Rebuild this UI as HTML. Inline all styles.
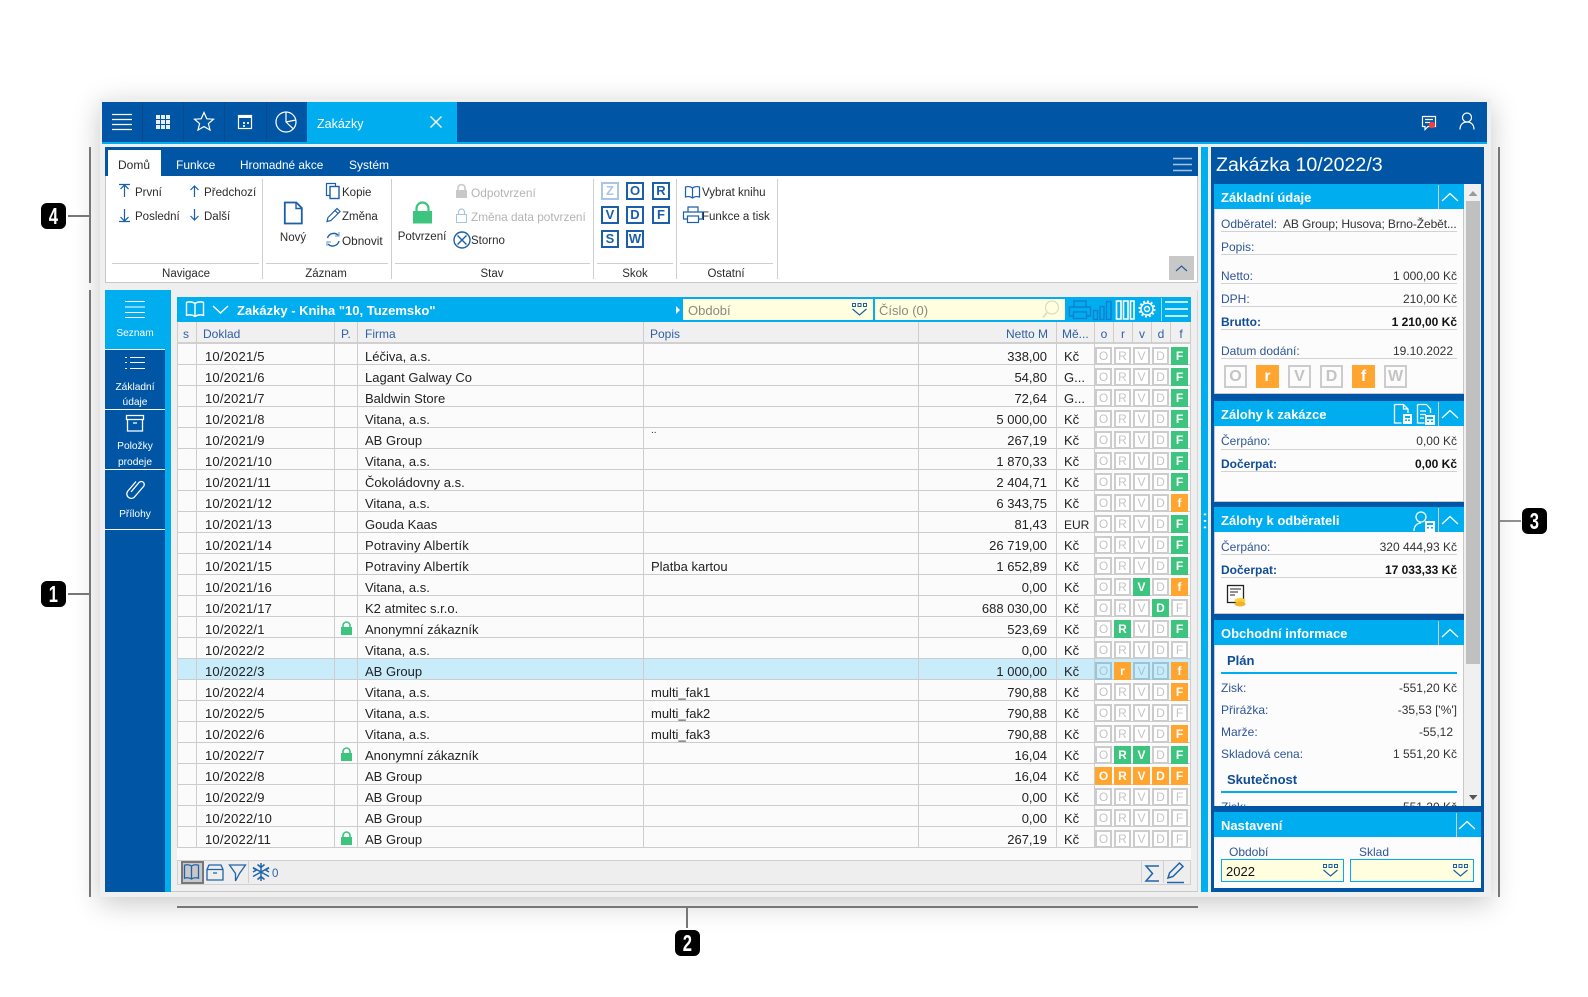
<!DOCTYPE html>
<html lang="cs"><head><meta charset="utf-8"><title>Zakázky</title>
<style>
html,body{margin:0;padding:0;background:#fff}
#p{position:relative;width:1588px;height:997px;overflow:hidden;background:#fff;font-family:"Liberation Sans",sans-serif;font-size:12px;color:#2b2b2b}
#p div,#p span.t{position:absolute}
.t{white-space:nowrap;line-height:16px}
.w{color:#fff}
.bw{color:#fff;font-weight:bold;font-size:13px}
.lb{color:#2f5597}
.lbb{color:#0f4c97;font-weight:bold}
.v{color:#333}
.vb{color:#111;font-weight:bold}
.g{color:#b4b4b4}
.c{transform:translateX(-50%)}
.sk{width:14px;height:14px;border:2px solid #1a5fa8;color:#1a5fa8;font-weight:bold;font-size:13px;line-height:14px;text-align:center;background:#fff}
.h{color:#2f5fa5;top:326px}
.r{left:177px;width:1014px;height:20px;border-bottom:1px solid #ccc;font-size:13px;line-height:26px;color:#222}
.r span{position:absolute;white-space:nowrap;top:0}
.a{left:28px;letter-spacing:.2px}.f{left:188px}.o{left:474px}.n{right:144px}.m{left:887px}
.r b{position:absolute;top:3px;width:13px;height:14px;border:2px solid #ccc;color:#c4c4c4;font-weight:normal;font-size:12px;line-height:14px;text-align:center;background:#fff}
.r b:nth-of-type(1){left:918px}.r b:nth-of-type(2){left:937px}.r b:nth-of-type(3){left:956px}.r b:nth-of-type(4){left:975px}.r b:nth-of-type(5){left:994px}
.r b.x{background:#3dc47e;border-color:#3dc47e;color:#fff;font-weight:bold}
.r b.y{background:#ffa530;border-color:#ffa530;color:#fff;font-weight:bold}
.s b{background:transparent;border-color:#9cc4d6;color:#a8c4d2}
.hd{background:#00aeef;height:25px;left:1214px;width:250px}
.bd{background:#fcfcfc;left:1214px;width:248px;border:1px solid #c8c8c8;border-top:0}
.bx{width:19px;height:19px;top:365px;border:2px solid #ccc;color:#c4c4c4;font-weight:bold;font-size:16px;line-height:19px;text-align:center}
.bx.y{background:#ffa530;border-color:#ffa530;color:#fff}
.ba{background:#000;color:#fff;width:25px;height:26px;border-radius:6px;font-weight:bold;font-size:23px;line-height:26px;text-align:center}
.ba span{display:inline-block;transform:scaleX(.72)}
</style></head><body><div id="p">

<div style="left:100px;top:99px;width:1391px;height:798px;background:#efefef;box-shadow:0 6px 26px rgba(0,0,0,.22)"></div>

<!-- top bar -->
<div style="left:102px;top:102px;width:1385px;height:40px;background:#0056a4"></div>
<div style="left:102px;top:142px;width:1385px;height:2px;background:#00aeef"></div>
<div style="left:307px;top:102px;width:150px;height:40px;background:#00aeef"></div>
<span class="t w" style="left:317px;top:116px;font-size:12.5px">Zakázky</span>

<!-- ribbon -->
<div style="left:105px;top:147px;width:1093px;height:29px;background:#0056a4"></div>
<div style="left:105px;top:176px;width:1091px;height:106px;background:#fff;border:1px solid #c8c8c8;border-top:0"></div>
<div style="left:108px;top:150px;width:53px;height:26px;background:#fff"></div>
<span class="t" style="left:118px;top:157px">Domů</span>
<span class="t w" style="left:176px;top:157px">Funkce</span>
<span class="t w" style="left:240px;top:157px;font-size:11.8px">Hromadné akce</span>
<span class="t w" style="left:349px;top:157px">Systém</span>

<span class="t" style="left:135px;top:185px;font-size:11.5px">První</span>
<span class="t" style="left:204px;top:185px;font-size:11.6px">Předchozí</span>
<span class="t" style="left:135px;top:209px;font-size:11.5px">Poslední</span>
<span class="t" style="left:204px;top:209px;font-size:11.5px">Další</span>
<span class="t c" style="left:293px;top:230px;font-size:11.5px">Nový</span>
<span class="t" style="left:342px;top:185px;font-size:11.5px">Kopie</span>
<span class="t" style="left:342px;top:209px;font-size:11.5px">Změna</span>
<span class="t" style="left:342px;top:233px;font-size:11.8px">Obnovit</span>
<span class="t c" style="left:422px;top:229px;font-size:11.5px">Potvrzení</span>
<span class="t g" style="left:471px;top:185px;font-size:11.9px">Odpotvrzení</span>
<span class="t g" style="left:471px;top:209px;font-size:11.8px">Změna data potvrzení</span>
<span class="t" style="left:471px;top:233px;font-size:11.5px">Storno</span>
<div class="sk" style="left:601px;top:182px;border-color:#a9c6e4;color:#a9c6e4">Z</div>
<div class="sk" style="left:626px;top:182px">O</div>
<div class="sk" style="left:652px;top:182px">R</div>
<div class="sk" style="left:601px;top:206px">V</div>
<div class="sk" style="left:626px;top:206px">D</div>
<div class="sk" style="left:652px;top:206px">F</div>
<div class="sk" style="left:601px;top:230px">S</div>
<div class="sk" style="left:626px;top:230px">W</div>
<span class="t" style="left:702px;top:185px;font-size:11.5px">Vybrat knihu</span>
<span class="t" style="left:702px;top:209px;font-size:11.5px">Funkce a tisk</span>
<span class="t c" style="left:186px;top:266px;font-size:11.5px">Navigace</span>
<span class="t c" style="left:326px;top:266px;font-size:11.5px">Záznam</span>
<span class="t c" style="left:492px;top:266px;font-size:11.5px">Stav</span>
<span class="t c" style="left:635px;top:266px;font-size:11.5px">Skok</span>
<span class="t c" style="left:726px;top:266px;font-size:11.5px">Ostatní</span>
<div style="left:1169px;top:256px;width:25px;height:24px;background:#c8c8c8"></div>

<!-- left sidebar -->
<div style="left:105px;top:290px;width:60px;height:602px;background:#0056a4"></div>
<div style="left:165px;top:290px;width:6px;height:602px;background:#00aeef"></div>
<div style="left:105px;top:290px;width:60px;height:59px;background:#00aeef"></div>
<div style="left:105px;top:349px;width:60px;height:1px;background:#fff"></div>
<div style="left:105px;top:409px;width:60px;height:1px;background:#fff"></div>
<div style="left:105px;top:469px;width:60px;height:1px;background:#fff"></div>
<div style="left:105px;top:529px;width:60px;height:1px;background:#fff"></div>
<span class="t w c" style="left:135px;top:326px;font-size:10.2px">Seznam</span>
<span class="t w c" style="left:135px;top:380px;font-size:10.2px">Základní</span>
<span class="t w c" style="left:135px;top:395px;font-size:10.2px">údaje</span>
<span class="t w c" style="left:135px;top:439px;font-size:10.2px">Položky</span>
<span class="t w c" style="left:135px;top:455px;font-size:10.2px">prodeje</span>
<span class="t w c" style="left:135px;top:507px;font-size:10.2px">Přílohy</span>

<!-- main -->
<div style="left:171px;top:290px;width:1026px;height:601px;background:#efefef;border-bottom:1px solid #c8c8c8;border-right:1px solid #d6d6d6"></div>
<div style="left:177px;top:297px;width:1014px;height:25px;background:#00aeef"></div>
<span class="t bw" style="left:237px;top:303px;font-size:13px">Zakázky - Kniha "10, Tuzemsko"</span>
<div style="left:683px;top:299px;width:190px;height:21px;background:#ffffe0"></div>
<div style="left:875px;top:299px;width:190px;height:21px;background:#ffffe0"></div>
<span class="t" style="left:688px;top:303px;color:#8a8a80;font-size:13px">Období</span>
<span class="t" style="left:879px;top:303px;color:#8a8a80;font-size:13px">Číslo (0)</span>

<div style="left:177px;top:322px;width:1014px;height:20px;background:#f0f0f0;border-bottom:2px solid #d0d0d0"></div>
<div style="left:177px;top:344px;width:1014px;height:516px;background:#fbfbfb"></div>
<span class="t h" style="left:183px">s</span>
<span class="t h" style="left:203px">Doklad</span>
<span class="t h" style="left:341px">P.</span>
<span class="t h" style="left:365px">Firma</span>
<span class="t h" style="left:650px">Popis</span>
<span class="t h" style="right:540px">Netto M</span>
<span class="t h" style="left:1062px">Mě...</span>
<span class="t h c" style="left:1104px">o</span>
<span class="t h c" style="left:1123px">r</span>
<span class="t h c" style="left:1142px">v</span>
<span class="t h c" style="left:1161px">d</span>
<span class="t h c" style="left:1181px">f</span>

<div class="r" style="top:344px"><span class="a">10/2021/5</span><span class="f">Léčiva, a.s.</span><span class="n">338,00</span><span class="m">Kč</span><b>O</b><b>R</b><b>V</b><b>D</b><b class="x">F</b></div>
<div class="r" style="top:365px"><span class="a">10/2021/6</span><span class="f">Lagant Galway Co</span><span class="n">54,80</span><span class="m">G...</span><b>O</b><b>R</b><b>V</b><b>D</b><b class="x">F</b></div>
<div class="r" style="top:386px"><span class="a">10/2021/7</span><span class="f">Baldwin Store</span><span class="n">72,64</span><span class="m">G...</span><b>O</b><b>R</b><b>V</b><b>D</b><b class="x">F</b></div>
<div class="r" style="top:407px"><span class="a">10/2021/8</span><span class="f">Vitana, a.s.</span><span class="n">5 000,00</span><span class="m">Kč</span><b>O</b><b>R</b><b>V</b><b>D</b><b class="x">F</b></div>
<div class="r" style="top:428px"><span class="a">10/2021/9</span><span class="f">AB Group</span><span class="o" style="top:-10px;font-size:10px">..</span><span class="n">267,19</span><span class="m">Kč</span><b>O</b><b>R</b><b>V</b><b>D</b><b class="x">F</b></div>
<div class="r" style="top:449px"><span class="a">10/2021/10</span><span class="f">Vitana, a.s.</span><span class="n">1 870,33</span><span class="m">Kč</span><b>O</b><b>R</b><b>V</b><b>D</b><b class="x">F</b></div>
<div class="r" style="top:470px"><span class="a">10/2021/11</span><span class="f">Čokoládovny a.s.</span><span class="n">2 404,71</span><span class="m">Kč</span><b>O</b><b>R</b><b>V</b><b>D</b><b class="x">F</b></div>
<div class="r" style="top:491px"><span class="a">10/2021/12</span><span class="f">Vitana, a.s.</span><span class="n">6 343,75</span><span class="m">Kč</span><b>O</b><b>R</b><b>V</b><b>D</b><b class="y">f</b></div>
<div class="r" style="top:512px"><span class="a">10/2021/13</span><span class="f">Gouda Kaas</span><span class="n">81,43</span><span class="m" style="font-size:12px">EUR</span><b>O</b><b>R</b><b>V</b><b>D</b><b class="x">F</b></div>
<div class="r" style="top:533px"><span class="a">10/2021/14</span><span class="f" style="letter-spacing:.15px">Potraviny Albertík</span><span class="n">26 719,00</span><span class="m">Kč</span><b>O</b><b>R</b><b>V</b><b>D</b><b class="x">F</b></div>
<div class="r" style="top:554px"><span class="a">10/2021/15</span><span class="f" style="letter-spacing:.15px">Potraviny Albertík</span><span class="o">Platba kartou</span><span class="n">1 652,89</span><span class="m">Kč</span><b>O</b><b>R</b><b>V</b><b>D</b><b class="x">F</b></div>
<div class="r" style="top:575px"><span class="a">10/2021/16</span><span class="f">Vitana, a.s.</span><span class="n">0,00</span><span class="m">Kč</span><b>O</b><b>R</b><b class="x">V</b><b>D</b><b class="y">f</b></div>
<div class="r" style="top:596px"><span class="a">10/2021/17</span><span class="f">K2 atmitec s.r.o.</span><span class="n">688 030,00</span><span class="m">Kč</span><b>O</b><b>R</b><b>V</b><b class="x">D</b><b>F</b></div>
<div class="r" style="top:617px"><span class="a">10/2022/1</span><span class="f">Anonymní zákazník</span><span class="n">523,69</span><span class="m">Kč</span><b>O</b><b class="x">R</b><b>V</b><b>D</b><b class="x">F</b></div>
<div class="r" style="top:638px"><span class="a">10/2022/2</span><span class="f">Vitana, a.s.</span><span class="n">0,00</span><span class="m">Kč</span><b>O</b><b>R</b><b>V</b><b>D</b><b>F</b></div>
<div class="r s" style="top:659px;background:#c9ecfb"><span class="a">10/2022/3</span><span class="f">AB Group</span><span class="n">1 000,00</span><span class="m">Kč</span><b>O</b><b class="y">r</b><b>V</b><b>D</b><b class="y">f</b></div>
<div class="r" style="top:680px"><span class="a">10/2022/4</span><span class="f">Vitana, a.s.</span><span class="o">multi_fak1</span><span class="n">790,88</span><span class="m">Kč</span><b>O</b><b>R</b><b>V</b><b>D</b><b class="y">F</b></div>
<div class="r" style="top:701px"><span class="a">10/2022/5</span><span class="f">Vitana, a.s.</span><span class="o">multi_fak2</span><span class="n">790,88</span><span class="m">Kč</span><b>O</b><b>R</b><b>V</b><b>D</b><b>F</b></div>
<div class="r" style="top:722px"><span class="a">10/2022/6</span><span class="f">Vitana, a.s.</span><span class="o">multi_fak3</span><span class="n">790,88</span><span class="m">Kč</span><b>O</b><b>R</b><b>V</b><b>D</b><b class="y">F</b></div>
<div class="r" style="top:743px"><span class="a">10/2022/7</span><span class="f">Anonymní zákazník</span><span class="n">16,04</span><span class="m">Kč</span><b>O</b><b class="x">R</b><b class="x">V</b><b>D</b><b class="x">F</b></div>
<div class="r" style="top:764px"><span class="a">10/2022/8</span><span class="f">AB Group</span><span class="n">16,04</span><span class="m">Kč</span><b class="y">O</b><b class="y">R</b><b class="y">V</b><b class="y">D</b><b class="y">F</b></div>
<div class="r" style="top:785px"><span class="a">10/2022/9</span><span class="f">AB Group</span><span class="n">0,00</span><span class="m">Kč</span><b>O</b><b>R</b><b>V</b><b>D</b><b>F</b></div>
<div class="r" style="top:806px"><span class="a">10/2022/10</span><span class="f">AB Group</span><span class="n">0,00</span><span class="m">Kč</span><b>O</b><b>R</b><b>V</b><b>D</b><b>F</b></div>
<div class="r" style="top:827px"><span class="a">10/2022/11</span><span class="f">AB Group</span><span class="n">267,19</span><span class="m">Kč</span><b>O</b><b>R</b><b>V</b><b>D</b><b>F</b></div>

<div style="left:177px;top:860px;width:1012px;height:23px;background:#eeeeee;border:1px solid #d0d0d0"></div>
<div style="left:181px;top:861px;width:19px;height:19px;background:#c8c8c8;border:2px solid #777"></div>
<span class="t" style="left:272px;top:866px;color:#2f5fa5;font-size:11.5px">0</span>

<!-- right panel -->
<div style="left:1201px;top:147px;width:7px;height:745px;background:#00aeef"></div>
<div style="left:1211px;top:147px;width:273px;height:745px;background:#0056a4"></div>
<span class="t w" style="left:1216px;top:154px;font-size:19.6px;line-height:22px">Zakázka 10/2022/3</span>
<div style="left:1464px;top:184px;width:17px;height:622px;background:#f0f0f0"></div>
<div style="left:1466px;top:201px;width:14px;height:463px;background:#c0c0c0"></div>

<div class="bd" style="top:209px;height:184px"></div>
<div class="hd" style="top:184px"></div>
<span class="t bw" style="left:1221px;top:190px">Základní údaje</span>
<span class="t lb" style="left:1221px;top:216px">Odběratel:</span>
<span class="t v" style="left:1283px;top:216px;letter-spacing:-.1px">AB Group; Husova; Brno-Žebět...</span>
<span class="t lb" style="left:1221px;top:239px">Popis:</span>
<span class="t lb" style="left:1221px;top:268px">Netto:</span><span class="t v" style="right:131px;top:268px">1 000,00 Kč</span>
<span class="t lb" style="left:1221px;top:291px">DPH:</span><span class="t v" style="right:131px;top:291px">210,00 Kč</span>
<span class="t lbb" style="left:1221px;top:314px">Brutto:</span><span class="t vb" style="right:131px;top:314px">1 210,00 Kč</span>
<span class="t lb" style="left:1221px;top:343px">Datum dodání:</span><span class="t v" style="right:135px;top:343px">19.10.2022</span>
<div class="bx" style="left:1224px">O</div>
<div class="bx y" style="left:1256px">r</div>
<div class="bx" style="left:1288px">V</div>
<div class="bx" style="left:1320px">D</div>
<div class="bx y" style="left:1352px">f</div>
<div class="bx" style="left:1384px">W</div>

<div class="bd" style="top:426px;height:75px"></div>
<div class="hd" style="top:401px"></div>
<span class="t bw" style="left:1221px;top:407px">Zálohy k zakázce</span>
<span class="t lb" style="left:1221px;top:433px">Čerpáno:</span><span class="t v" style="right:131px;top:433px">0,00 Kč</span>
<span class="t lbb" style="left:1221px;top:456px">Dočerpat:</span><span class="t vb" style="right:131px;top:456px">0,00 Kč</span>

<div class="bd" style="top:532px;height:81px"></div>
<div class="hd" style="top:507px"></div>
<span class="t bw" style="left:1221px;top:513px">Zálohy k odběrateli</span>
<span class="t lb" style="left:1221px;top:539px">Čerpáno:</span><span class="t v" style="right:131px;top:539px">320 444,93 Kč</span>
<span class="t lbb" style="left:1221px;top:562px">Dočerpat:</span><span class="t vb" style="right:131px;top:562px">17 033,33 Kč</span>

<div class="bd" style="top:645px;height:165px"></div>
<div class="hd" style="top:620px"></div>
<span class="t bw" style="left:1221px;top:626px">Obchodní informace</span>
<span class="t lbb" style="left:1227px;top:653px;font-size:13px">Plán</span>
<span class="t lb" style="left:1221px;top:680px">Zisk:</span><span class="t v" style="right:131px;top:680px">-551,20 Kč</span>
<span class="t lb" style="left:1221px;top:702px">Přirážka:</span><span class="t v" style="right:131px;top:702px">-35,53 ['%']</span>
<span class="t lb" style="left:1221px;top:724px">Marže:</span><span class="t v" style="right:135px;top:724px">-55,12</span>
<span class="t lb" style="left:1221px;top:746px">Skladová cena:</span><span class="t v" style="right:131px;top:746px">1 551,20 Kč</span>
<span class="t lbb" style="left:1227px;top:772px;font-size:13px">Skutečnost</span>
<span class="t lb" style="left:1221px;top:799px">Zisk:</span><span class="t v" style="right:131px;top:799px">-551,20 Kč</span>

<div style="left:1211px;top:806px;width:273px;height:6px;background:#0056a4"></div>
<div style="left:1214px;top:837px;width:267px;height:51px;background:#fcfcfc"></div>
<div class="hd" style="top:812px;width:267px"></div>
<span class="t bw" style="left:1221px;top:818px">Nastavení</span>
<span class="t lb" style="left:1229px;top:844px">Období</span>
<span class="t lb" style="left:1359px;top:844px">Sklad</span>
<div style="left:1221px;top:859px;width:121px;height:21px;background:#ffffe0;border:1px solid #00aeef"></div>
<div style="left:1350px;top:859px;width:122px;height:21px;background:#ffffe0;border:1px solid #00aeef"></div>
<span class="t" style="left:1226px;top:864px;font-size:13px;color:#111">2022</span>

<!-- annotation badges -->
<div class="ba" style="left:41px;top:203px"><span>4</span></div>
<div class="ba" style="left:41px;top:581px"><span>1</span></div>
<div class="ba" style="left:675px;top:930px"><span>2</span></div>
<div class="ba" style="left:1522px;top:508px"><span>3</span></div>

<!-- icons & lines -->
<svg width="1588" height="997" viewBox="0 0 1588 997" style="position:absolute;left:0;top:0;pointer-events:none" fill="none">
<!-- annotation lines -->
<g stroke="#777" stroke-width="2">
<path d="M90 147V283M90 290V897M177 907H1198M1499 147V897"/>
<path d="M68 216H90M68 594H90M687 908V928"/>
</g>
<path d="M1500 521H1521" stroke="#222" stroke-width="1"/>
<!-- top bar -->
<path d="M142.5 102v40M183.5 102v40M224.5 102v40M266.5 102v40" stroke="#0a4a8c"/>
<g stroke="#fff" stroke-width="1.2">
<path d="M112 114.5h20M112 119.5h20M112 124.5h20M112 129.5h20"/>
<polygon points="204,112.5 206.8,118.8 213.5,119.2 208.4,123.6 210,130 204,126.6 198,130 199.6,123.6 194.5,119.2 201.2,118.8"/>
<rect x="238.5" y="115.5" width="13" height="13"/>
<circle cx="286" cy="122" r="10"/>
<path d="M286 112v10l7.2 6.8M286 122l9.8-2"/>
<path d="M430.5 116.5l11 11M441.5 116.5l-11 11" stroke-width="1.4"/>
<path d="M1422.5 116.5h13v10h-7.5l-3 3v-3h-2.5z"/>
<path d="M1425 119.5h8M1425 122.5h5"/>
<circle cx="1467" cy="117.5" r="4.5"/>
<path d="M1460 129.5c0-5 3-7.5 7-7.5s7 2.5 7 7.5"/>
</g>
<path fill="#fff" d="M156 115h4v4h-4zM161 115h4v4h-4zM166 115h4v4h-4zM156 120h4v4h-4zM161 120h4v4h-4zM166 120h4v4h-4zM156 125h4v4h-4zM161 125h4v4h-4zM166 125h4v4h-4z" opacity=".9"/>
<path fill="#fff" d="M238 115h14v3h-14z"/>
<path fill="#fff" d="M243 122h2v2h-2zM247 122h2v2h-2zM243 125h2v2h-2z" opacity=".85"/>
<circle cx="1432" cy="125" r="3.2" fill="#f2413c"/>
<!-- ribbon hamburger -->
<path d="M1173 158.5h19M1173 164.5h19M1173 170.5h19" stroke="#a8c4e2" stroke-width="1.4"/>
<!-- ribbon separators -->
<path d="M262.5 179v100M391.5 179v100M593.5 179v100M676.5 179v100M777.5 179v100M112 263.5h147M266 263.5h122M395 263.5h195M597 263.5h76M680 263.5h93" stroke="#cfcfcf"/>
<path d="M1176 271l5.5-5 5.5 5" stroke="#2a5a94" stroke-width="1.2"/>
<!-- ribbon icons -->
<g stroke="#1a5fa8" stroke-width="1.2">
<path d="M119 184.5h11M124.5 197v-12M120.5 189l4-4 4 4"/>
<path d="M194.5 197v-11M190.5 190l4-4 4 4"/>
<path d="M119 221.5h11M124.5 209v12M120.5 217l4 4 4-4"/>
<path d="M194.5 209v11M190.5 216l4 4 4-4"/>
<path d="M284.8 202.5h11.5l5.5 5.5v15.5h-17z" stroke-width="1.8" fill="#fff"/>
<path d="M296 202.5v6h6" stroke-width="1.4"/>
<rect x="326.5" y="183.5" width="9" height="12"/>
<rect x="330" y="186.5" width="9" height="12" fill="#fff" stroke-width="1.4"/>
<path d="M327 221.5l1-4 9-9 3 3-9 9zM335 210.5l3 3"/>
<path d="M327.5 238a6.5 6.5 0 0 1 11-2.5M339 241a6.5 6.5 0 0 1-11 3" stroke-width="1.4"/>
<path d="M339 232v4h-4M327 246v-4h4" stroke="#7ea9d6"/>
<circle cx="462" cy="240" r="8" stroke-width="1.4"/>
<path d="M457.5 235.5l9 9M466.5 235.5l-9 9" stroke-width="1.4"/>
<path d="M692.5 188c-2-1.6-5-1.6-7-1v10c2-.6 5-.6 7 1c2-1.6 5-1.6 7-1v-10c-2-.6-5-.6-7 1zM692.5 188v10"/>
<path d="M688 212v-5h10v5M687 219h-3.5v-7h19v7h-3.5"/>
<rect x="687.5" y="216" width="11" height="6.5" fill="#fff"/>
</g>
<rect x="413" y="211" width="19" height="12.5" fill="#3dc47e"/>
<path d="M416.5 211.5v-3a6 6 0 0 1 12 0v3" stroke="#3dc47e" stroke-width="2.2"/>
<rect x="456" y="190" width="11" height="8" fill="#c8c8c8"/>
<path d="M458 190.5v-2.5a3.5 3.5 0 0 1 7 0v2.5" stroke="#c8c8c8" stroke-width="1.6"/>
<rect x="456.5" y="214.5" width="10" height="8" stroke="#a9c4e2"/>
<path d="M458.5 214.5v-2.5a3 3 0 0 1 6 0v2.5" stroke="#a9c4e2" stroke-width="1.2"/>
<!-- sidebar icons -->
<g stroke="#fff" stroke-width="1.1">
<path d="M125 301.5h20M125 307h20M125 312.5h20M125 317.5h20"/>
<path d="M130 357.5h15M130 362.5h15M130 368.5h15M125 357.5h2M125 362.5h2M125 368.5h2"/>
<path d="M126.5 415.5h17v4h-17zM127.5 419.5v11.5h15v-11.5M133 423h4" stroke-width="1.3"/>
<path d="M131 492l8-9.500a3 3 0 0 1 4.500 4l-9.500 11a4.500 4.500 0 0 1-6.500-6l8.500-10" stroke-width="1.3"/>
</g>
<!-- list header icons -->
<g stroke="#fff" stroke-width="1.4">
<path d="M195 303.500c-2.500-1.800-6-1.800-8.500-1.200v13c2.500-.6 6-.6 8.500 1.200c2.500-1.800 6-1.800 8.500-1.200v-13c-2.500-.6-6-.6-8.500 1.200zM195 303.500v13"/>
<path d="M213 306l7.500 7 7.500-7"/>
<path d="M1165 302h23M1165 309h23M1165 316h23"/>
<path d="M1116.500 301h4.500v18h-4.500zM1123.500 301h4.500v18h-4.500zM1130.500 301h3.500v18h-3.500z" stroke-width="1.6"/>
<circle cx="1147" cy="309" r="6"/>
<circle cx="1147" cy="309" r="2.500"/>
</g>
<circle cx="1147" cy="309" r="7.500" stroke="#fff" stroke-width="2" stroke-dasharray="2 1.900"/>
<path d="M1161.500 298v23" stroke="#fff" opacity=".6"/>
<path d="M676 306l4 4-4 4z" fill="#fff"/>
<g stroke="#0f7fce" stroke-width="1.4">
<path d="M1074 307v-6h12v6M1073 316h-3.500v-9h21v9H1087"/>
<rect x="1073.500" y="312" width="13" height="6.500"/>
<path d="M1093.500 310.500h4v9h-4zM1100 306.500h4v13h-4zM1106.500 301.500h4.500v18h-4.500z"/>
</g>
<circle cx="1052" cy="307.500" r="6.500" stroke="#dcdcc8" stroke-width="1.300"/>
<path d="M1047 312.500l-4 5" stroke="#dcdcc8" stroke-width="1.800"/>
<!-- dropdown glyphs -->
<g fill="#fff" stroke="#1a5fa8" stroke-width="1">
<path d="M852.500 303.500h3v3h-3zM858 303.500h3v3h-3zM863.500 303.500h3v3h-3z"/>
<path d="M1323.500 864.500h3v3h-3zM1329 864.500h3v3h-3zM1334.500 864.500h3v3h-3z"/>
<path d="M1453.500 864.500h3v3h-3zM1459 864.500h3v3h-3zM1464.500 864.500h3v3h-3z"/>
</g>
<path d="M852.500 309l7 6 7-6M1323.500 870l7 6 7-6M1453.500 870l7 6 7-6" stroke="#1a5fa8" stroke-width="1.200"/>
<!-- grid lines -->
<path d="M177.500 322v526M196.500 322v526M334.500 322v526M357.500 322v526M643.500 322v526M918.500 322v526M1056.500 322v526M1094.500 322v526M1113.500 322v22M1132.500 322v22M1151.500 322v22M1170.500 322v22M1190.500 322v526" stroke="#cdcdcd"/>
<!-- locks -->
<g fill="#3dc47e">
<rect x="341" y="627" width="11" height="8"/><rect x="341" y="753" width="11" height="8"/><rect x="341" y="837" width="11" height="8"/>
</g>
<path d="M343 627.500v-2a3.500 3.500 0 0 1 7 0v2M343 753.500v-2a3.500 3.500 0 0 1 7 0v2M343 837.500v-2a3.500 3.500 0 0 1 7 0v2" stroke="#3dc47e" stroke-width="1.600"/>
<!-- footer -->
<path d="M248.500 861v22M1141.500 861v22M1163.500 861v22" stroke="#d0d0d0"/>
<g stroke="#1f64ab" stroke-width="1.300">
<path d="M191.500 866c-2-1.400-5-1.400-7-.8v13c2-.6 5-.6 7 .8c2-1.400 5-1.400 7-.8v-13c-2-.6-5-.6-7 .8zM191.500 866v13"/>
<path d="M207 869.500l2-4.500h12l2 4.500v10.500h-16zM207 869.500h16M213 873h4"/>
<path d="M229.500 865h16l-6 8.500-4 7.500v-7.500z"/>
<path d="M261 863v18M253 867.500l16 9M269 867.500l-16 9M257.500 864.500l3.500 3 3.500-3M257.500 879.500l3.500-3 3.500 3M253 872l3.500-2-3.500-2M269 872l-3.500-2 3.500-2" stroke-width="1.500"/>
<path d="M1159 866h-13l6.500 7.500-6.500 7.500h13" stroke-width="1.500"/>
<path d="M1168 878l1.500-5 10-10 3.500 3.500-10 10zM1167 882.500h17" stroke-width="1.500"/>
</g>
<!-- right panel lines -->
<path d="M1221 231.500h236M1221 254.500h236M1221 283.500h236M1221 306.500h236M1221 329.500h236M1221 358.500h236M1221 449.500h236M1221 471.500h236M1221 554.500h236M1221 577.500h236" stroke="#d2d2d2"/>
<path d="M1221 673h236M1221 792h236" stroke="#00aeef" stroke-width="2"/>
<!-- right panel headers -->
<path d="M1438.500 185v24M1438.500 402v24M1438.500 508v24M1438.500 621v24M1456.500 813v24" stroke="#d9c9bf"/>
<path d="M1442 201l8-7.500 8 7.500M1442 418l8-7.500 8 7.500M1442 524l8-7.500 8 7.500M1442 637l8-7.500 8 7.500M1459 829l8-7.500 8 7.500" stroke="#fff" stroke-width="1.300"/>
<path d="M1473 191l4.500 5h-9z" fill="#9a9a9a"/>
<path d="M1469 795h8.500l-4.500 5z" fill="#555"/>
<g stroke="#fff" stroke-width="1.300">
<path d="M1394.500 404.500h9l4.500 4.500v4M1394.500 404.500v18.500h7M1403.500 404.500v4.500h4.500"/>
<path d="M1417.500 404.500h9l4 4.500v4M1417.500 404.500v18.500h7M1420 411h6M1420 414.500h6M1420 418h4"/>
<circle cx="1421" cy="517" r="5"/>
<path d="M1414 531c0-5 3-8 7-8"/>
</g>
<g fill="#fff">
<path d="M1403 414h9v10h-9zM1425 415h10v10h-10zM1425 521h10v11h-10z"/>
</g>
<g fill="#00aeef">
<path d="M1405 416h5v2h-5zM1405 419.500h2v1.500h-2zM1408 419.500h2v1.500h-2zM1427 417h6v2h-6zM1427 420.500h2v1.500h-2zM1431 420.500h2v1.500h-2zM1427 523h6v2h-6zM1427 527h2v1.500h-2zM1431 527h2v1.500h-2z"/>
</g>
<!-- yellow coin doc -->
<rect x="1227.500" y="585.500" width="16" height="17" stroke="#222" stroke-width="1.300" fill="#fff"/>
<path d="M1230 589h11M1230 592h8M1230 595h5" stroke="#222"/>
<ellipse cx="1240" cy="600.500" rx="5.500" ry="2.500" fill="#ffcf3c"/>
<ellipse cx="1240" cy="604" rx="5.500" ry="2.500" fill="#f0b429"/>
<!-- splitter dots -->
<path d="M1205 513.500v1.800M1205 520v1.800M1205 526.500v1.800" stroke="#fff" stroke-width="2.400"/>
</svg>
</div></body></html>
